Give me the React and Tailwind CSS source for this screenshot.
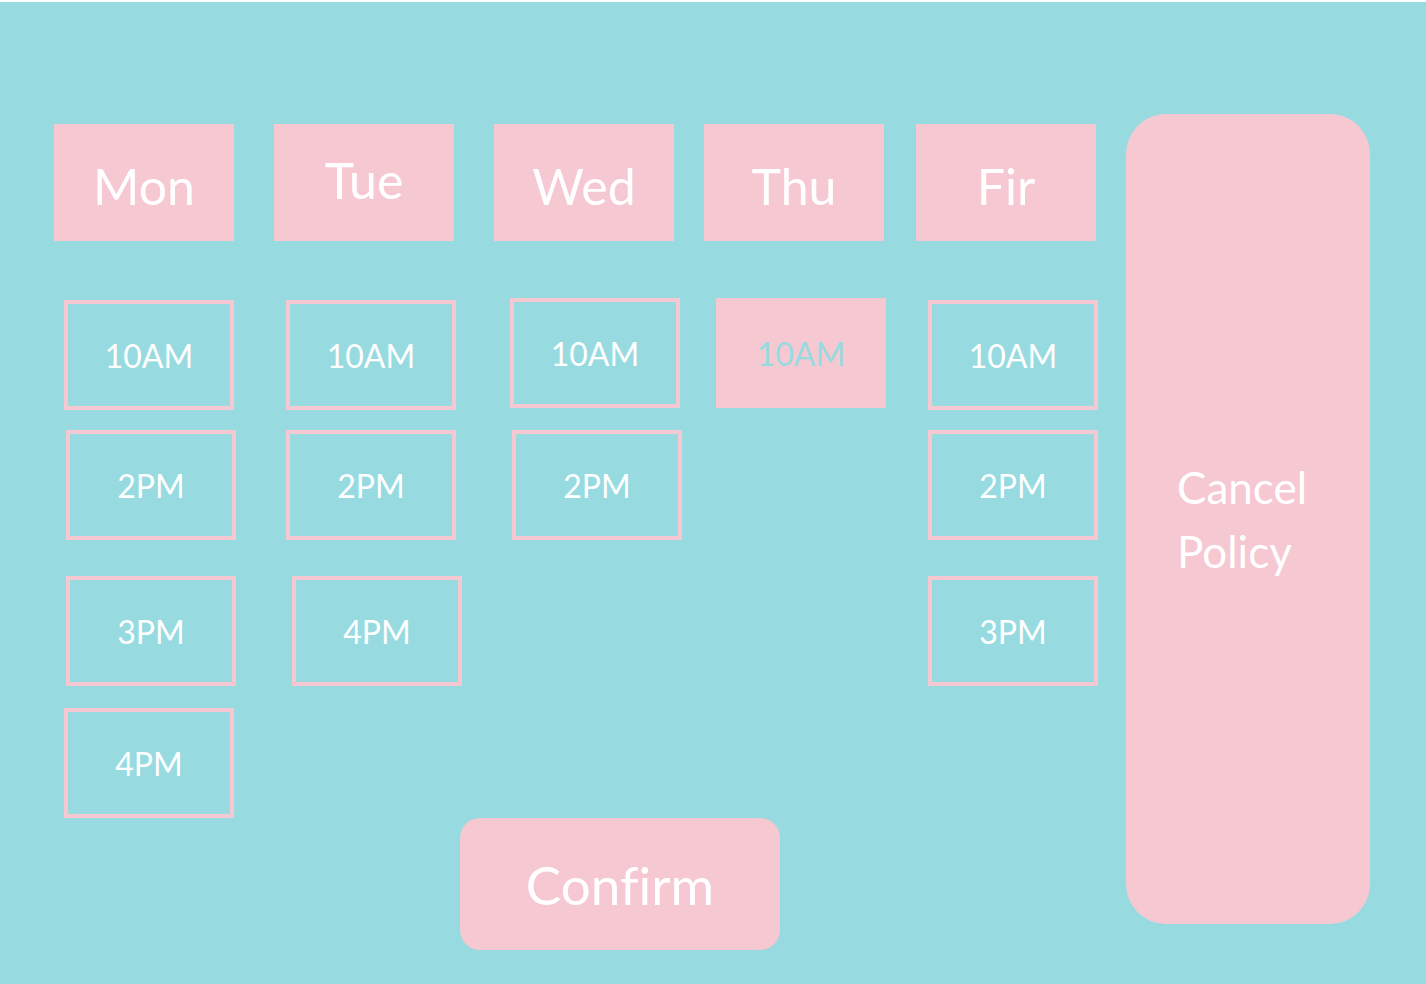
import React from "react";

const days = [
  {
    name: "Mon",
    col: "w-[180px]",
    head: "pt-[6px]",
    slots: [
      { label: "10AM", cls: "ml-[10px] mt-[59px]" },
      { label: "2PM", cls: "ml-[12px] mt-[20px]" },
      { label: "3PM", cls: "ml-[12px] mt-[36px]" },
      { label: "4PM", cls: "ml-[10px] mt-[22px]" },
    ],
  },
  {
    name: "Tue",
    col: "w-[180px] ml-[40px]",
    head: "pb-[6px]",
    slots: [
      { label: "10AM", cls: "ml-[12px] mt-[59px]" },
      { label: "2PM", cls: "ml-[12px] mt-[20px]" },
      { label: "4PM", cls: "ml-[18px] mt-[36px]" },
    ],
  },
  {
    name: "Wed",
    col: "w-[180px] ml-[40px]",
    head: "pt-[6px]",
    slots: [
      { label: "10AM", cls: "ml-[16px] mt-[57px]" },
      { label: "2PM", cls: "ml-[18px] mt-[22px]" },
    ],
  },
  {
    name: "Thu",
    col: "w-[180px] ml-[30px]",
    head: "pt-[6px]",
    slots: [{ label: "10AM", cls: "ml-[12px] mt-[57px]", picked: true }],
  },
  {
    name: "Fir",
    col: "w-[180px] ml-[32px]",
    head: "pt-[6px]",
    slots: [
      { label: "10AM", cls: "ml-[12px] mt-[59px]" },
      { label: "2PM", cls: "ml-[12px] mt-[20px]" },
      { label: "3PM", cls: "ml-[12px] mt-[36px]" },
    ],
  },
];

function Slot({ label, cls, picked }) {
  if (picked) {
    return (
      <div
        className={`w-[170px] h-[110px] shrink-0 flex items-center justify-center pt-[2px] bg-[#f6c8d1] text-[#97dbe1] text-[32px] leading-none ${cls}`}
      >
        {label}
      </div>
    );
  }
  return (
    <div
      className={`w-[170px] h-[110px] shrink-0 flex items-center justify-center pt-[2px] border-4 border-[#f6c8d1] text-white text-[32px] leading-none ${cls}`}
    >
      {label}
    </div>
  );
}

export default function App() {
  return (
    <div
      className="w-full h-[984px] bg-[#97dbe1] border-t-2 border-white overflow-hidden [font-variant-ligatures:none]"
      style={{ fontFamily: "Lato, 'Open Sans', sans-serif" }}
    >
      <div className="flex items-start pl-[54px] pt-[112px]">
        {/* days + time slots */}
        <div className="mt-[10px] flex flex-col">
          <div className="flex items-start">
            {days.map((day) => (
              <div key={day.name} className={`flex flex-col ${day.col}`}>
                <div
                  className={`h-[117px] bg-[#f6c8d1] flex items-center justify-center text-white text-[50px] leading-none ${day.head}`}
                >
                  {day.name}
                </div>
                {day.slots.map((s) => (
                  <Slot key={s.label} {...s} />
                ))}
              </div>
            ))}
          </div>
          <button className="ml-[406px] w-[320px] h-[132px] rounded-[20px] bg-[#f6c8d1] text-white text-[53px] leading-none flex items-center justify-center [font-variant-ligatures:none]">
            Confirm
          </button>
        </div>

        {/* cancel policy */}
        <div className="ml-[30px] w-[244px] h-[810px] rounded-[40px] bg-[#f6c8d1] flex items-center pl-[51px]">
          <p className="text-white text-[44px] leading-[64px]">
            Cancel
            <br />
            Policy
          </p>
        </div>
      </div>
    </div>
  );
}
